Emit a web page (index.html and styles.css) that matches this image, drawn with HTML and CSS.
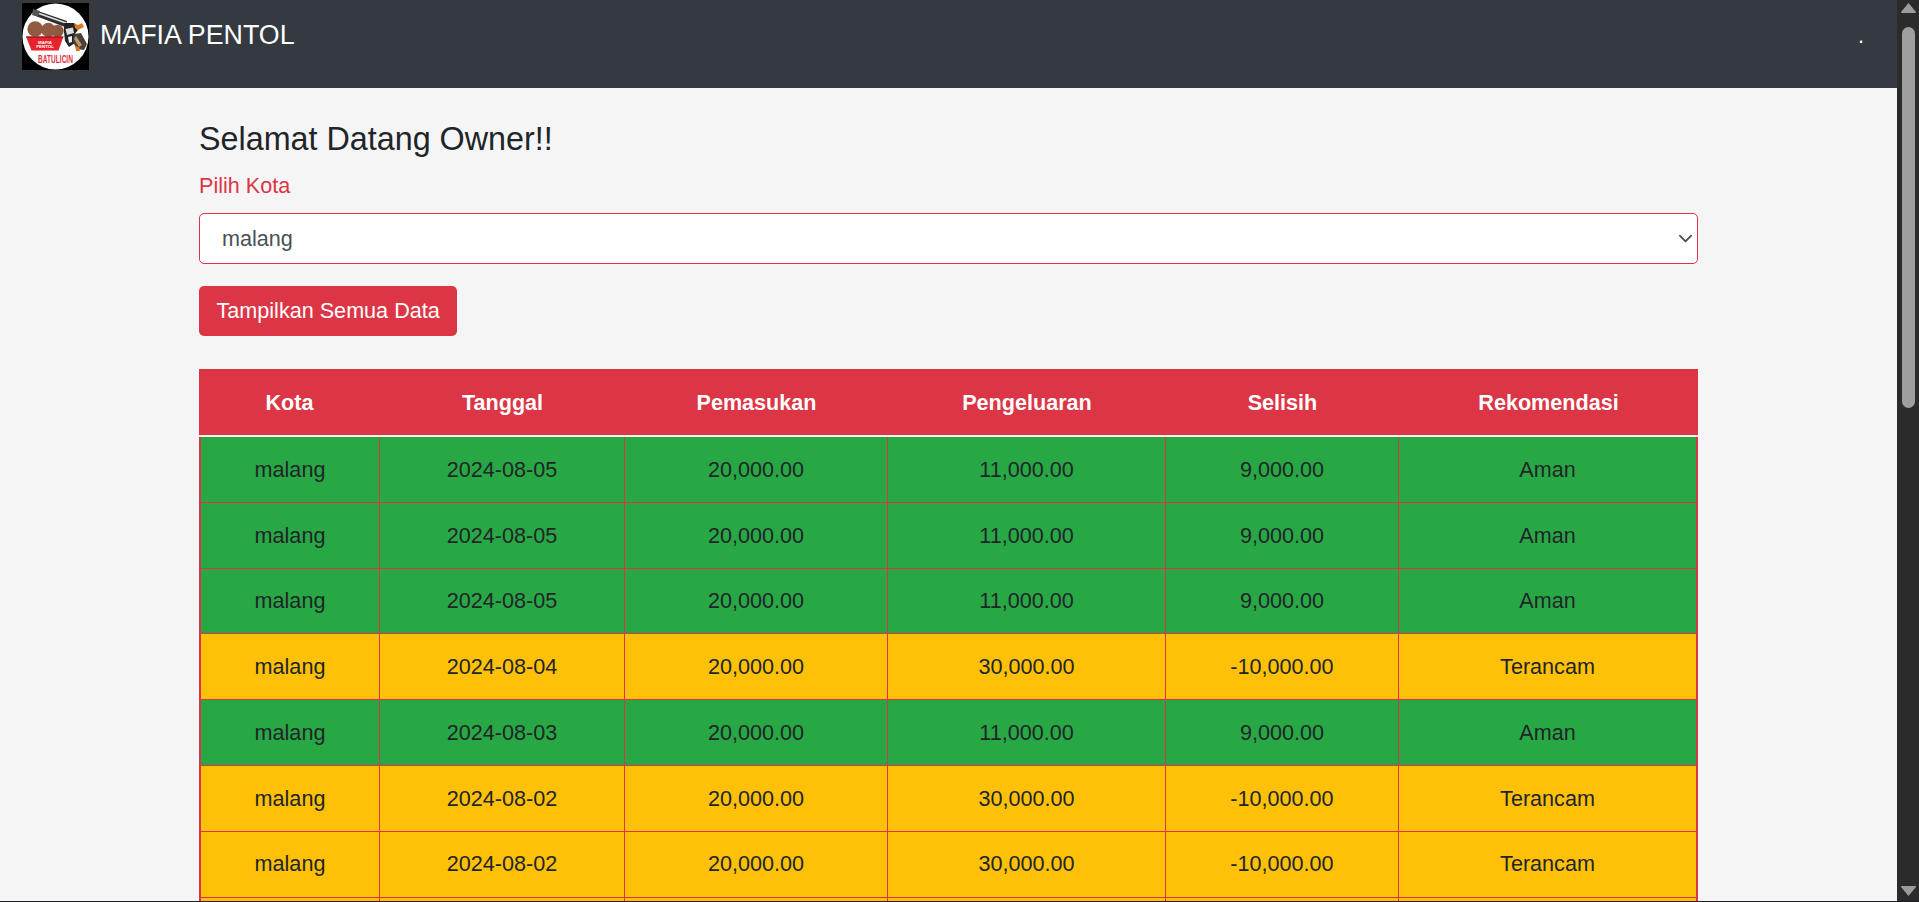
FILE: index.html
```html
<!DOCTYPE html>
<html lang="en">
<head>
    <meta charset="UTF-8">
    <meta name="viewport" content="width=device-width, initial-scale=1.0">
    <title>Mafia Pentol</title>
    <link rel="stylesheet" href="styles.css">
</head>
<body>

    <div class="window">
        <div class="page">
            <nav class="navbar">
                <a class="brand" href="#">
                    <svg class="logo" viewBox="0 0 67 67" width="67" height="67">
                        <rect width="67" height="67" fill="#000"/>
                        <circle cx="33.5" cy="33.5" r="33" fill="#fff"/>
                        <!-- gun -->
                        <path d="M13 7 L45 18 L43 24 L11 12 Z" fill="#2e2e2e"/>
                        <path d="M17 10.5 L44 20" stroke="#e4e4e4" stroke-width="1.6" fill="none"/>
                        <path d="M11 6 L18 8 L16 13.5 L10 12 Z" fill="#555"/>
                        <path d="M42 20 L52 20 L56 27 L52 32 L53 40 L47 44 L43 38 L42 29 Z" fill="#222"/>
                        <path d="M43.5 26 L51 24.5 L52 30 L45 32 Z" fill="#dcdcdc"/>
                        <path d="M46 34 L50 33 L50 39 L47 40 Z" fill="#eee"/>
                        <path d="M52 20 L56 22 L60 20 L62 24 L56 27 L53 25 Z" fill="#dc7a22"/>
                        <path d="M52 31 L59 30 L65 41 L62 47 L55 46 L51 39 Z" fill="#4c4036"/>
                        <path d="M54 33 L60 42 L57 44 L52 36 Z" fill="#b89a70"/>
                        <path d="M53 43 L57 44 L58 48 L54 48 Z" fill="#dc7a22"/>
                        <!-- bowl of meatballs -->
                        <circle cx="35.5" cy="28" r="6.2" fill="#8f5842"/>
                        <circle cx="26.3" cy="27" r="7.2" fill="#935a42"/>
                        <circle cx="13.2" cy="26" r="7.8" fill="#935a42"/>
                        <path d="M4 33.5 L41.5 33.5 L36.5 47.5 L9.5 47.5 Z" fill="#e8222c"/>
                        <path d="M4 33.5 L41.5 33.5 L41 34.6 L4.4 34.6 Z" fill="#7a1016"/>
                        <text class="logo-bowl" x="23" y="40.5" text-anchor="middle">MAFIA</text>
                        <text class="logo-bowl" x="23" y="45" text-anchor="middle">PENTOL</text>
                        <text class="logo-city" transform="translate(33.5 60) scale(0.8 1.25)" text-anchor="middle">BATULICIN</text>
                    </svg>
                    <span class="brand-name">MAFIA PENTOL</span>
                </a>
                <span class="nav-dot">.</span>
            </nav>

            <div class="content">
                <h4 class="welcome">Selamat Datang Owner!!</h4>
                <label class="city-label" for="city">Pilih Kota</label>
                <select class="city-select" id="city">
                    <option>malang</option>
                    <option>batulicin</option>
                </select>
                <button class="btn-all">Tampilkan Semua Data</button>

                <table class="report">
                    <colgroup>
                        <col class="col-kota">
                        <col class="col-tanggal">
                        <col class="col-masuk">
                        <col class="col-keluar">
                        <col class="col-selisih">
                        <col class="col-rekomendasi">
                    </colgroup>
                    <thead>
                        <tr>
                            <th>Kota</th>
                            <th>Tanggal</th>
                            <th>Pemasukan</th>
                            <th>Pengeluaran</th>
                            <th>Selisih</th>
                            <th>Rekomendasi</th>
                        </tr>
                    </thead>
                    <tbody>
                        <tr class="aman">
                            <td>malang</td><td>2024-08-05</td><td>20,000.00</td><td>11,000.00</td><td>9,000.00</td><td>Aman</td>
                        </tr>
                        <tr class="aman">
                            <td>malang</td><td>2024-08-05</td><td>20,000.00</td><td>11,000.00</td><td>9,000.00</td><td>Aman</td>
                        </tr>
                        <tr class="aman">
                            <td>malang</td><td>2024-08-05</td><td>20,000.00</td><td>11,000.00</td><td>9,000.00</td><td>Aman</td>
                        </tr>
                        <tr class="terancam">
                            <td>malang</td><td>2024-08-04</td><td>20,000.00</td><td>30,000.00</td><td>-10,000.00</td><td>Terancam</td>
                        </tr>
                        <tr class="aman">
                            <td>malang</td><td>2024-08-03</td><td>20,000.00</td><td>11,000.00</td><td>9,000.00</td><td>Aman</td>
                        </tr>
                        <tr class="terancam">
                            <td>malang</td><td>2024-08-02</td><td>20,000.00</td><td>30,000.00</td><td>-10,000.00</td><td>Terancam</td>
                        </tr>
                        <tr class="terancam">
                            <td>malang</td><td>2024-08-02</td><td>20,000.00</td><td>30,000.00</td><td>-10,000.00</td><td>Terancam</td>
                        </tr>
                        <tr class="terancam">
                            <td></td><td></td><td></td><td></td><td></td><td></td>
                        </tr>
                    </tbody>
                </table>
            </div>
        </div>

        <div class="scrollbar">
            <svg class="scroll-arrow" viewBox="0 0 15 10" width="15" height="10"><path d="M7.5 0 L15 9 Q15 10 14 10 L1 10 Q0 10 0 9 Z"/></svg>
            <div class="scroll-thumb"></div>
            <svg class="scroll-arrow scroll-arrow-down" viewBox="0 0 15 10" width="15" height="10"><path d="M7.5 10 L15 1 Q15 0 14 0 L1 0 Q0 0 0 1 Z"/></svg>
        </div>
    </div>

</body>
</html>
```

FILE: styles.css
```css
* { box-sizing: border-box; }
html, body { height: 100%; }
body { margin: 0; font-family: "Liberation Sans", Arial, sans-serif; font-size: 21.6px; line-height: 1.5; color: #212529; background-color: #f5f5f5; overflow: hidden; }

.window { display: flex; height: 901px; }
body::after { content: ""; display: block; height: 1px; background-color: #1e1e24; }
.page { flex: 1; min-width: 0; overflow: hidden; }

.navbar { display: flex; align-items: flex-start; height: 88px; padding: 3px 33px 0 22px; background-color: #343a40; }
.brand { display: flex; align-items: flex-start; gap: 11px; color: #fff; text-decoration: none; }
.logo { display: block; }
.logo-bowl { font-size: 4.4px; font-weight: bold; fill: #fff; }
.logo-city { font-size: 8.2px; font-weight: bold; fill: #e0303c; }
.brand-name { font-size: 26.8px; line-height: 40px; margin-top: 12px; }
.nav-dot { margin-left: auto; margin-top: 17px; line-height: 32px; color: #fff; }

.content { padding: 32px 199px 0; }
.welcome { margin: 0; font-size: 32.3px; font-weight: 400; line-height: 38px; }
.city-label { display: block; margin-top: 12px; line-height: 32px; color: #dc3545; }
.city-select { display: block; width: 100%; height: 51px; margin-top: 11px; padding: 0 40px 0 22px; font-family: inherit; font-size: 21.6px; color: #495057; background: #fff url("data:image/svg+xml,%3csvg xmlns='http://www.w3.org/2000/svg' viewBox='0 0 16 16'%3e%3cpath fill='none' stroke='%23495057' stroke-linecap='round' stroke-linejoin='round' stroke-width='2' d='M2 5l6 6 6-6'/%3e%3c/svg%3e") no-repeat right 4px center / 15px 15px; border: 1px solid #dc3545; border-radius: 5px; appearance: none; }
.btn-all { display: block; height: 50px; margin-top: 22px; padding: 0 17.5px; font-family: inherit; font-size: 21.6px; color: #fff; background-color: #dc3545; border: none; border-radius: 5px; }

.report { width: 1499px; margin-top: 33px; table-layout: fixed; border-collapse: separate; border-spacing: 0; text-align: center; }
.col-kota { width: 181px; }
.col-tanggal { width: 245px; }
.col-masuk { width: 263px; }
.col-keluar { width: 278px; }
.col-selisih { width: 233px; }
.col-rekomendasi { width: 299px; }
.report th { height: 68px; padding: 3px 0 0; font-weight: 700; color: #fff; background-color: #dc3545; border-bottom: 2px solid #f0f0f0; }
.report td { height: 65.8px; padding: 1px 0 0; border-right: 1px solid #dc3545; border-bottom: 1px solid #dc3545; }
.report td:first-child { border-left: 2px solid #dc3545; }
.report td:last-child { border-right: 2px solid #dc3545; }
.aman td { background-color: #28a745; }
.terancam td { background-color: #ffc107; }

.scrollbar { display: flex; flex-direction: column; align-items: center; flex: 0 0 22px; width: 22px; background-color: #2b2b2b; }
.scroll-arrow { flex: none; margin-top: 3px; fill: #9c9c9c; }
.scroll-arrow-down { margin-top: auto; margin-bottom: 5px; }
.scroll-thumb { width: 13px; height: 381px; margin-top: 14px; background-color: #9f9f9f; border-radius: 7px; }
```
